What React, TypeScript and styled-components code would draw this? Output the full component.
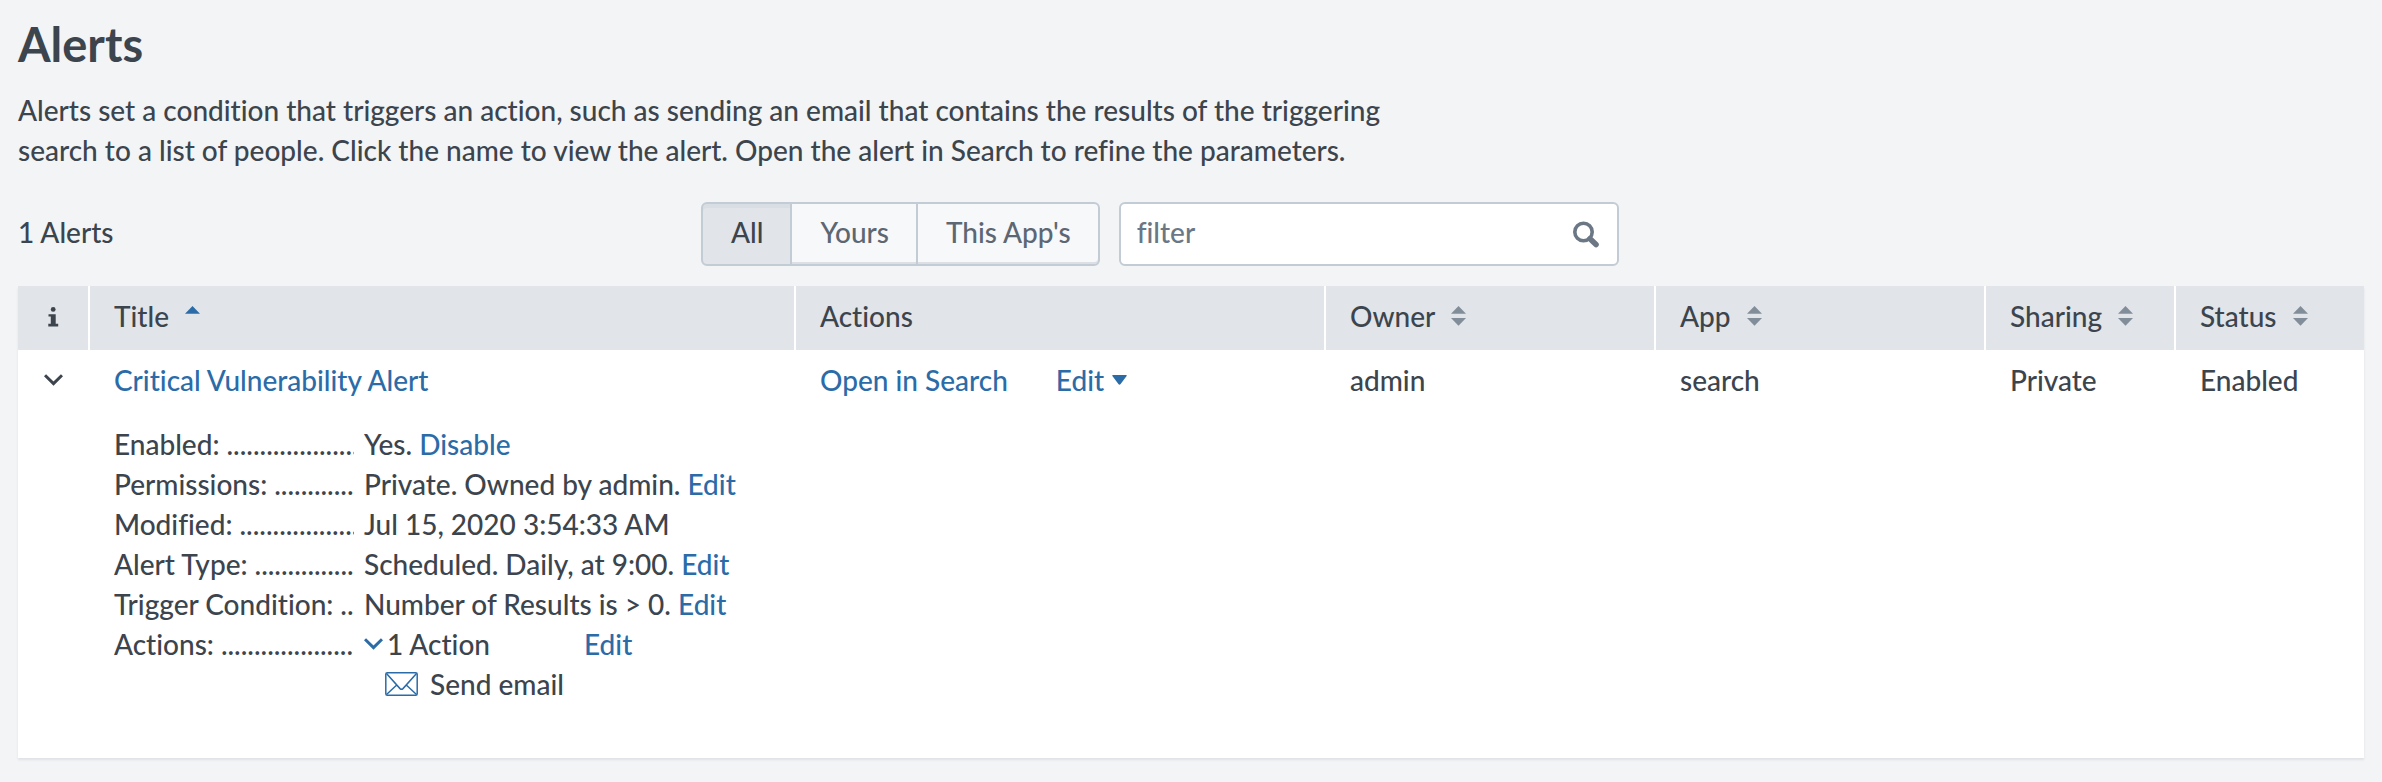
import React, { useState } from "react";
import styled, { createGlobalStyle } from "styled-components";

const color = {
  page: "#f2f4f5",
  text: "#3c444d",
  muted: "#5c6773",
  placeholder: "#6b7785",
  link: "#2b6ca8",
  border: "#c3cbd4",
  header: "#e1e4e9",
  control: "#f7f8fa",
  sort: "#818d99",
  white: "#ffffff",
};

const GlobalStyle = createGlobalStyle`
  *, *::before, *::after { box-sizing: border-box; }
  body {
    margin: 0;
    background: ${color.page};
    color: ${color.text};
    font: 500 28px/40px Lato, "Liberation Sans", sans-serif;
    font-variant-ligatures: none;
  }
  button, input { font: inherit; font-variant-ligatures: none; color: inherit; margin: 0; }
`;

const Page = styled.main`
  padding: 16px 18px 24px;
`;

const Heading = styled.h1`
  margin: 0 0 17px;
  font-size: 47px;
  font-weight: 700;
  line-height: 57px;
`;

const Description = styled.p`
  margin: 0 0 32px;
  max-width: 1400px;
`;

const Toolbar = styled.div`
  display: flex;
  margin-bottom: 20px;
`;

const Count = styled.div`
  flex: 0 1 683px;
  padding: 10px 0 14px;
`;

const ButtonGroup = styled.div`
  display: flex;
  flex: none;
  margin-right: 19px;
`;

const GroupButton = styled.button<{ $active?: boolean }>`
  padding: 8px 27px 12px 28px;
  border: 2px solid ${color.border};
  background: ${(p) => (p.$active ? color.header : color.control)};
  color: ${(p) => (p.$active ? color.text : color.muted)};
  box-shadow: ${(p) =>
    p.$active ? "inset 0 4px 0 #d9dde4" : "inset 0 -2px 0 #dcdfe3"};
  cursor: pointer;

  & + & {
    margin-left: -2px;
  }
  &:first-child {
    border-radius: 6px 0 0 6px;
  }
  &:last-child {
    border-radius: 0 6px 6px 0;
  }
`;

const FilterBox = styled.label`
  display: flex;
  align-items: center;
  flex: 0 1 500px;
  min-width: 0;
  padding: 0 18px 0 16px;
  border: 2px solid ${color.border};
  border-radius: 6px;
  background: ${color.white};
`;

const FilterInput = styled.input`
  flex: 1;
  min-width: 0;
  height: 60px;
  padding: 0 0 4px;
  border: 0;
  outline: 0;
  background: transparent;

  &::placeholder {
    color: ${color.placeholder};
    opacity: 1;
  }
`;

const Table = styled.table`
  width: 100%;
  table-layout: fixed;
  border-collapse: separate;
  border-spacing: 0;
  background: ${color.white};
  box-shadow: 0 2px 2px #dfe2e7;
`;

const Col = styled.col<{ $width?: number }>`
  width: ${(p) => (p.$width ? `${p.$width}px` : "auto")};
`;

const Th = styled.th`
  height: 64px;
  padding: 10px 0 14px 24px;
  border-left: 2px solid ${color.white};
  background: ${color.header};
  font-weight: inherit;
  text-align: left;

  &:first-child {
    padding-left: 0;
    border-left: 0;
    text-align: center;
  }
`;

const SortButton = styled.button`
  display: flex;
  align-items: center;
  gap: 16px;
  padding: 0;
  border: 0;
  background: none;
  cursor: pointer;
`;

const Td = styled.td`
  height: 64px;
  padding: 10px 0 14px 26px;

  &:first-child {
    padding-left: 0;
  }
`;

const DetailCell = styled.td`
  padding: 10px 24px 54px 26px;
`;

const Link = styled.a`
  color: ${color.link};
  text-decoration: none;
`;

const RowActions = styled.div`
  display: flex;
  gap: 48px;
`;

const MenuButton = styled.button`
  display: flex;
  align-items: center;
  gap: 8px;
  padding: 0;
  border: 0;
  background: none;
  color: ${color.link};
  cursor: pointer;
`;

const IconButton = styled.button`
  display: flex;
  align-items: center;
  justify-content: center;
  width: 100%;
  height: 40px;
  padding: 0;
  border: 0;
  background: none;
  cursor: pointer;
`;

const Details = styled.dl`
  display: grid;
  grid-template-columns: 240px 1fr;
  column-gap: 10px;
  margin: 0;
`;

const Term = styled.dt`
  overflow: hidden;
  white-space: nowrap;

  &::after {
    content: "${".".repeat(40)}";
    margin-left: 7px;
  }
`;

const Value = styled.dd`
  margin: 0;
`;

const ActionSummary = styled.div`
  display: flex;
`;

const ActionToggle = styled.button`
  display: flex;
  align-items: center;
  gap: 4px;
  width: 220px;
  padding: 0;
  border: 0;
  background: none;
  cursor: pointer;
`;

const ActionItem = styled.div`
  display: flex;
  align-items: center;
  gap: 12px;
  padding-left: 21px;
`;

const InfoIcon = () => (
  <svg width="11" height="20" viewBox="0 0 11 20" fill={color.text} aria-label="Info">
    <circle cx="5.2" cy="2.4" r="2.4" />
    <path d="M.5 7.2h7.2v9.6h2.5V19.4H.3v-2.6h2.5V9.6H.5z" />
  </svg>
);

const Chevron = ({ stroke }: { stroke: string }) => (
  <svg width="19" height="12" viewBox="0 0 19 12" fill="none" stroke={stroke} strokeWidth="3">
    <path d="M1 1.2 9.5 9.6 18 1.2" />
  </svg>
);

const Caret = () => (
  <svg width="15" height="10" viewBox="0 0 15 10" fill={color.link}>
    <path d="M1 0h13q1.300 0 .6 1.100L8.600 9q-1.100 1.400-2.200 0L.4 1.100Q-.3 0 1 0z" />
  </svg>
);

const SortIcon = ({ ascending }: { ascending?: boolean }) => (
  <svg width="15" height="20" viewBox="0 0 15 20" fill={ascending ? color.link : color.sort}>
    <path d="M0 7.700 7.500 0 15 7.700z" />
    {!ascending && <path d="M0 12h15l-7.500 7.700z" />}
  </svg>
);

const SearchIcon = () => (
  <svg width="26" height="27" viewBox="0 0 26 27" fill="none" stroke={color.placeholder}>
    <circle cx="10.500" cy="11" r="8.700" strokeWidth="3.600" />
    <path d="M17 17.800l6 5.700" strokeWidth="5.600" strokeLinecap="round" />
  </svg>
);

const EnvelopeIcon = () => (
  <svg width="33" height="24" viewBox="0 0 33 24" fill="none" stroke={color.link} strokeWidth="1.500">
    <rect x=".8" y=".8" width="31.400" height="22.400" rx="1.500" />
    <path d="M1.500 1.500 15 16.600q1.500 1.300 3 0L31.500 1.500M1.500 22.500 12 12.800M31.500 22.500 21 12.800" />
  </svg>
);

const Detail = ({ label, children }: { label: string; children: React.ReactNode }) => (
  <>
    <Term>{label}:</Term>
    <Value>{children}</Value>
  </>
);

const scopes = ["All", "Yours", "This App's"];
const sortable = ["Owner", "App", "Sharing", "Status"];

export default function App() {
  const [scope, setScope] = useState("All");
  const [filter, setFilter] = useState("");

  return (
    <>
      <GlobalStyle />
      <Page>
        <Heading>Alerts</Heading>
        <Description>
          Alerts set a condition that triggers an action, such as sending an email that contains the
          results of the triggering search to a list of people. Click the name to view the alert.
          Open the alert in Search to refine the parameters.
        </Description>

        <Toolbar>
          <Count>1 Alerts</Count>
          <ButtonGroup>
            {scopes.map((s) => (
              <GroupButton key={s} type="button" $active={s === scope} onClick={() => setScope(s)}>
                {s}
              </GroupButton>
            ))}
          </ButtonGroup>
          <FilterBox>
            <FilterInput
              type="text"
              placeholder="filter"
              aria-label="filter"
              value={filter}
              onChange={(e) => setFilter(e.target.value)}
            />
            <SearchIcon />
          </FilterBox>
        </Toolbar>

        <Table>
          <colgroup>
            <Col $width={70} />
            <Col />
            <Col $width={530} />
            <Col $width={330} />
            <Col $width={330} />
            <Col $width={190} />
            <Col $width={190} />
          </colgroup>
          <thead>
            <tr>
              <Th>
                <InfoIcon />
              </Th>
              <Th>
                <SortButton type="button">
                  Title <SortIcon ascending />
                </SortButton>
              </Th>
              <Th>Actions</Th>
              {sortable.map((name) => (
                <Th key={name}>
                  <SortButton type="button">
                    {name} <SortIcon />
                  </SortButton>
                </Th>
              ))}
            </tr>
          </thead>
          <tbody>
            <tr>
              <Td>
                <IconButton type="button" aria-label="Collapse row">
                  <Chevron stroke={color.text} />
                </IconButton>
              </Td>
              <Td>
                <Link href="#alert">Critical Vulnerability Alert</Link>
              </Td>
              <Td>
                <RowActions>
                  <Link href="#search">Open in Search</Link>
                  <MenuButton type="button">
                    Edit <Caret />
                  </MenuButton>
                </RowActions>
              </Td>
              <Td>admin</Td>
              <Td>search</Td>
              <Td>Private</Td>
              <Td>Enabled</Td>
            </tr>
            <tr>
              <td />
              <DetailCell colSpan={6}>
                <Details>
                  <Detail label="Enabled">
                    Yes. <Link href="#disable">Disable</Link>
                  </Detail>
                  <Detail label="Permissions">
                    Private. Owned by admin. <Link href="#permissions">Edit</Link>
                  </Detail>
                  <Detail label="Modified">Jul 15, 2020 3:54:33 AM</Detail>
                  <Detail label="Alert Type">
                    Scheduled. Daily, at 9:00. <Link href="#type">Edit</Link>
                  </Detail>
                  <Detail label="Trigger Condition">
                    Number of Results is &gt; 0. <Link href="#condition">Edit</Link>
                  </Detail>
                  <Detail label="Actions">
                    <ActionSummary>
                      <ActionToggle type="button">
                        <Chevron stroke={color.link} /> 1 Action
                      </ActionToggle>
                      <Link href="#actions">Edit</Link>
                    </ActionSummary>
                    <ActionItem>
                      <EnvelopeIcon /> Send email
                    </ActionItem>
                  </Detail>
                </Details>
              </DetailCell>
            </tr>
          </tbody>
        </Table>
      </Page>
    </>
  );
}
